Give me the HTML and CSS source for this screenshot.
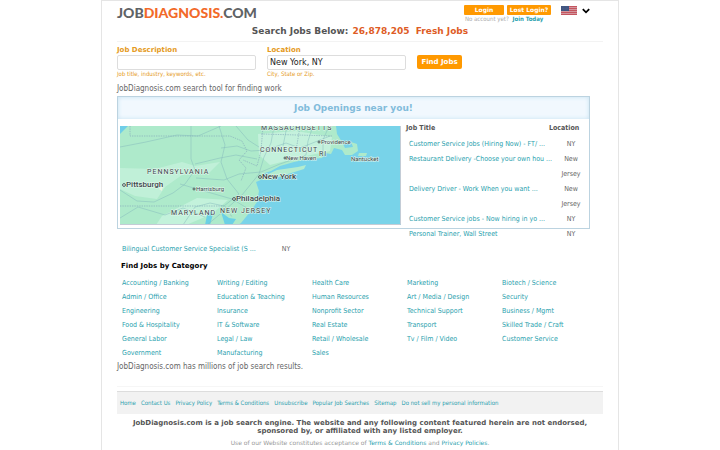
FILE: index.html
```
<!DOCTYPE html>
<html lang="en">
<head>
<meta charset="utf-8">
<title>JobDiagnosis.com</title>
<link rel="stylesheet" href="styles.css">
</head>
<body>
<div class="page">
  <header class="top">
    <a class="logo" href="#">JOB<span>DIAGNOSIS.</span>COM</a>
    <div class="account">
      <div class="account-buttons">
        <button type="button">Login</button>
        <button type="button">Lost Login?</button>
      </div>
      <p>No account yet? <a href="#">Join Today</a></p>
    </div>
    <button class="country" type="button" aria-label="Country">
      <svg class="flag" viewBox="0 0 16 9" aria-hidden="true">
        <rect width="16" height="9" fill="#d3959d"/>
        <path d="M0 .5h16M0 2.5h16M0 4.5h16M0 6.5h16M0 8.5h16" stroke="#c4555f" stroke-width="1"/>
        <rect width="8" height="5" fill="#405580"/>
        <path d="M1 1h6M1 2.5h6M1 4h6" stroke="#5b6b94" stroke-width=".5" stroke-dasharray=".6 .8"/>
      </svg>
      <svg class="chevron" viewBox="0 0 8 6" aria-hidden="true"><path d="M.8 1.2 4 4.3 7.2 1.2" fill="none" stroke="#000" stroke-width="1.8"/></svg>
    </button>
  </header>

  <h1>Search Jobs Below: <span>26,878,205&nbsp; Fresh Jobs</span></h1>

  <form class="search">
    <div class="field">
      <label for="job">Job Description</label>
      <input id="job" type="text">
      <small>Job title, industry, keywords, etc.</small>
    </div>
    <div class="field">
      <label for="place">Location</label>
      <input id="place" type="text" value="New York, NY">
      <small>City, State or Zip.</small>
    </div>
    <button type="button">Find Jobs</button>
  </form>

  <p class="note">JobDiagnosis.com search tool for finding work</p>

  <section class="panel">
    <h2>Job Openings near you!</h2>
    <div class="panel-body">
      <svg class="map" viewBox="0 0 281 99" role="img" aria-label="Map around New York">
        <rect width="281" height="99" fill="#78d3e9"/>
        <path d="M0 0H216L217 8 222 16 225 22 233 21 231 16 237 18 238 25 232 29 225 29 222 24 214 22 211 28 205 27 202 32 188 33 174 36 160 40 151 45 145 47 143 53 136 56 139 65 137 76 130 86 121 97 118 99H0Z" fill="#aeeacb"/>
        <path d="M0 42 35 43 62 36 75 40 100 36 89 47 62 49 45 61 37 73 15 70 0 63Z" fill="#c0f0d8"/>
        <path d="M42 90 77 72 108 74 92 88 66 99H36Z" fill="#c3f2db"/>
        <path d="M138 8 176 5 212 11 210 25 181 31 150 39 139 29Z" fill="#c4f1dc"/>
        <path d="M8 0 0 8V0Z" fill="#70cee8"/>
        <path d="M144 50 157 44 178 41 186 39 184 43 168 48 150 54 143 54Z" fill="#b4eccf"/>
        <path d="M239 27 247 27 246 30 238 30Z" fill="#aeeacb"/>
        <path d="M85 99 87 89 91 85 93 88 90 99ZM101 86 109 92 116 93 112 99H105Z" fill="#6bd0e5"/>
        <path d="M10 0V10H110L122 15 127 25 119 34 126 42 121 55M0 80H105L112 91M143 0 141 25 137 40 123 34M141 8 213 10M180 0 176 25" fill="none" stroke="#88aebb" stroke-width=".7" stroke-dasharray="1.4 1"/>
        <path d="M71 0V33L75 44 65 58 53 67 34 76 17 75 0 64M0 21 26 16 57 9 78 10 101 0M99 0 105 19 101 36 107 53 119 68 104 80 90 77 75 81 63 99M75 38 100 32 116 29 137 33M101 22 117 20 131 25 146 24 166 17 180 22 210 10M154 0 151 17 144 31 139 48 122 69 105 84 87 99M193 0 188 15 186 29 160 38 141 46 119 48 104 54 76 52M116 0 128 14 139 21M209 0 203 14 203 31M0 92 18 81 45 89 63 82 85 91M167 0 163 20M60 58 84 65 112 73 132 85" fill="none" stroke="#82b7bc" stroke-width=".8" opacity=".6"/>
        <path d="M39 63 43 58 42 65Z" fill="#e9f4df"/>
        <g class="region">
          <text x="141" y="4">MASSACHUSETTS</text>
          <text x="140" y="26">CONNECTICUT</text>
          <text x="199" y="30">RI</text>
          <text x="27" y="48">PENNSYLVANIA</text>
          <text x="51" y="89">MARYLAND</text>
          <text x="100" y="87">NEW JERSEY</text>
        </g>
        <g class="city">
          <text x="6" y="61">Pittsburgh</text>
          <text x="142" y="53">New York</text>
          <text x="116" y="75">Philadelphia</text>
        </g>
        <g class="town">
          <text x="76" y="65">Harrisburg</text>
          <text x="166" y="34">New Haven</text>
          <text x="201" y="18">Providence</text>
          <text x="231" y="35">Nantucket</text>
        </g>
        <g fill="#eef9f3" stroke="#39464a" stroke-width=".9">
          <circle cx="4" cy="59" r="1.4"/><circle cx="140" cy="51" r="1.4"/><circle cx="114" cy="73" r="1.4"/>
          <circle cx="74" cy="63" r="1"/><circle cx="165" cy="32" r="1"/><circle cx="199" cy="16" r="1"/>
        </g>
        <path d="M0 98.5H280.5V0" fill="none" stroke="#c3ccd6"/>
      </svg>
      <table class="jobs">
        <thead><tr><th>Job Title</th><th>Location</th></tr></thead>
        <tbody>
          <tr><td><a href="#">Customer Service Jobs (Hiring Now) - FT/ ...</a></td><td>NY</td></tr>
          <tr><td><a href="#">Restaurant Delivery -Choose your own hou ...</a></td><td>New Jersey</td></tr>
          <tr><td><a href="#">Delivery Driver - Work When you want ...</a></td><td>New Jersey</td></tr>
          <tr><td><a href="#">Customer Service jobs - Now hiring in yo ...</a></td><td>NY</td></tr>
          <tr><td><a href="#">Personal Trainer, Wall Street</a></td><td>NY</td></tr>
        </tbody>
      </table>
    </div>
  </section>
  <div class="extra-job"><a href="#">Bilingual Customer Service Specialist (S ...</a><span>NY</span></div>

  <section class="categories">
    <h2>Find Jobs by Category</h2>
    <div class="columns">
      <ul>
        <li><a href="#">Accounting / Banking</a></li><li><a href="#">Admin / Office</a></li><li><a href="#">Engineering</a></li><li><a href="#">Food &amp; Hospitality</a></li><li><a href="#">General Labor</a></li><li><a href="#">Government</a></li>
      </ul>
      <ul>
        <li><a href="#">Writing / Editing</a></li><li><a href="#">Education &amp; Teaching</a></li><li><a href="#">Insurance</a></li><li><a href="#">IT &amp; Software</a></li><li><a href="#">Legal / Law</a></li><li><a href="#">Manufacturing</a></li>
      </ul>
      <ul>
        <li><a href="#">Health Care</a></li><li><a href="#">Human Resources</a></li><li><a href="#">Nonprofit Sector</a></li><li><a href="#">Real Estate</a></li><li><a href="#">Retail / Wholesale</a></li><li><a href="#">Sales</a></li>
      </ul>
      <ul>
        <li><a href="#">Marketing</a></li><li><a href="#">Art / Media / Design</a></li><li><a href="#">Technical Support</a></li><li><a href="#">Transport</a></li><li><a href="#">Tv / Film / Video</a></li>
      </ul>
      <ul>
        <li><a href="#">Biotech / Science</a></li><li><a href="#">Security</a></li><li><a href="#">Business / Mgmt</a></li><li><a href="#">Skilled Trade / Craft</a></li><li><a href="#">Customer Service</a></li>
      </ul>
    </div>
  </section>
  <p class="note">JobDiagnosis.com has millions of job search results.</p>

  <footer>
    <nav>
      <a href="#">Home</a><a href="#">Contact Us</a><a href="#">Privacy Policy</a><a href="#">Terms &amp; Conditions</a><a href="#">Unsubscribe</a><a href="#">Popular Job Searches</a><a href="#">Sitemap</a><a href="#">Do not sell my personal information</a>
    </nav>
    <p class="disclaimer">JobDiagnosis.com is a job search engine. The website and any following content featured herein are not endorsed, sponsored by, or affiliated with any listed employer.</p>
    <p class="terms">Use of our Website constitutes acceptance of <a href="#">Terms &amp; Conditions</a> and <a href="#">Privacy Policies</a>.</p>
  </footer>
</div>
</body>
</html>
```
FILE: styles.css
```
* { box-sizing: border-box; }
body {
  margin: 0;
  background: #fff;
  color: #666;
  font: 7px/14px "DejaVu Sans Condensed", "DejaVu Sans", sans-serif;
  overflow-x: hidden;
}
h1, h2, p, ul { margin: 0; padding: 0; }
a { color: #2a9fae; text-decoration: none; }
button, input { font-family: "DejaVu Sans", sans-serif; }
button { border: 0; padding: 0; cursor: pointer; }

.page {
  max-width: 518px;
  min-height: 100vh;
  margin: 0 auto;
  padding: 0 15px;
  border: 1px solid #e5e5e5;
  border-bottom: 0;
}

.top { display: flex; align-items: flex-start; height: 22px; }
.logo {
  margin-right: auto;
  padding-top: 3px;
  color: #5f6366;
  font: 900 14px/18px Lato, sans-serif;
}
.logo span { color: #f26a2a; }
.account { padding-top: 4px; }
.account-buttons { display: flex; gap: 3px; }
.account-buttons button {
  width: 40px;
  height: 10px;
  border-radius: 1px;
  background: #f90;
  color: #fff;
  font-size: 6px;
  font-weight: bold;
  line-height: 10px;
}
.account-buttons button + button { width: 44px; }
.account p { padding-left: 1px; color: #aaa; font-size: 6px; line-height: 8px; }
.account p a { margin-left: 2px; font-weight: bold; }
.country { display: flex; align-items: center; gap: 5px; margin: 5px 13px 0 10px; background: none; }
.flag { width: 16px; height: 9px; }
.chevron { width: 8px; height: 6px; }

h1 {
  padding: 1px 0 3px;
  border-bottom: 1px solid #f3f3f3;
  color: #555;
  font: bold 9px/14px "DejaVu Sans", sans-serif;
  text-align: center;
}
h1 span { margin-left: 1px; color: #de5c26; }

.search { display: flex; gap: 11px; padding-top: 4px; font-family: "DejaVu Sans", sans-serif; }
.field { display: flex; flex-direction: column; flex: 0 1 139px; color: #e59a22; }
.field label { font-weight: bold; line-height: 9px; }
.field input {
  width: 100%;
  height: 15px;
  border: 1px solid #ddd;
  border-radius: 2px;
  padding: 0 2px;
  color: #222;
  font-size: 8px;
}
.field small { font: 6px/8px "DejaVu Sans Condensed", "DejaVu Sans", sans-serif; }
.search button {
  align-self: center;
  width: 45px;
  height: 14px;
  border-radius: 2px;
  background: #f90;
  color: #fff;
  font-size: 7px;
  font-weight: bold;
}

.note { font-size: 8px; line-height: 14px; }
.search + .note { padding: 4px 0 0; }

.panel { max-width: 473px; border: 1px solid #bcd3e0; }
.panel h2 {
  background: #f1f8fe;
  box-shadow: inset 0 0 4px #c5e2f2;
  color: #82bcdb;
  font: bold 9px/22px "DejaVu Sans", sans-serif;
  text-align: center;
}
.panel-body { display: flex; gap: 5px; padding: 7px 2px 3px; }
.map { flex: 0 0 281px; height: 99px; }
.map text { fill: #39464a; stroke: #e5f7ee; stroke-width: 1px; paint-order: stroke; font-family: Roboto, sans-serif; }
.region text { font-size: 7px; letter-spacing: 1px; }
.city text { font-size: 8px; font-weight: 500; }
.town text { font-size: 6px; }

.jobs {
  flex: 1;
  align-self: flex-start;
  table-layout: fixed;
  width: 0;
  min-width: 0;
  margin-bottom: -17px;
  border-collapse: collapse;
  line-height: 15px;
}
.jobs th { padding: 0 0 6px; color: #555; line-height: 5px; text-align: left; }
.jobs td { padding: 0 0 0 3px; vertical-align: top; white-space: nowrap; }
.jobs th:last-child { width: 38px; }
.jobs td:last-child { padding: 0 4px 0 10px; text-align: center; white-space: normal; }

.extra-job { display: flex; gap: 26px; padding: 13px 5px 0; line-height: 15px; }

.categories { padding: 2px 0 0 4px; }
.categories h2 { color: #000; font: bold 7px/14px "DejaVu Sans", sans-serif; }
.columns { display: grid; grid-template-columns: repeat(5, 95px); padding: 3px 0 0 1px; }
ul { list-style: none; }

footer { margin: 12px 0 0; border-top: 1px solid #f6f6f6; padding-top: 4px; }
nav { display: flex; gap: 5px; padding: 0 3px; border-top: 1px solid #ddd; background: #f2f2f2; font-size: 6px; line-height: 22px; }
.disclaimer { padding: 5px 10px 0; color: #555; font: bold 7px/8px "DejaVu Sans", sans-serif; text-align: center; }
.terms { padding-top: 2px; color: #999; font: 6px/12px "DejaVu Sans", sans-serif; text-align: center; }
```
